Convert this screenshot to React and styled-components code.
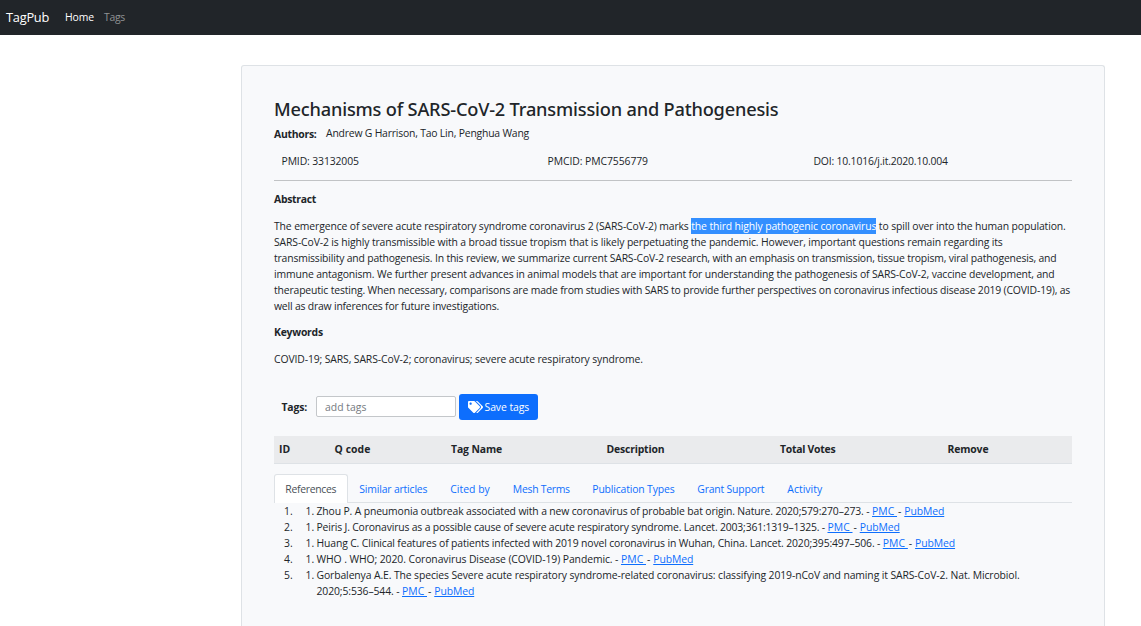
import React from "react";
import styled, { createGlobalStyle } from "styled-components";

const GlobalStyle = createGlobalStyle`
  * { box-sizing: border-box; }
  html, body { margin: 0; background: #fff; overflow: hidden; }
  body {
    height: 626px;
    color: #212529;
    font: 10.4px/16px "Open Sans", "Noto Sans", sans-serif;
    letter-spacing: -0.13px;
  }
`;

const Track = styled.span`
  letter-spacing: ${(p) => p.$ls}px;
  white-space: pre;
`;

const Navbar = styled.nav`
  display: flex;
  align-items: center;
  height: 35px;
  padding: 0 6px 1px;
  background: #212529;
`;

const Brand = styled.a`
  width: 59px;
  color: #fff;
  font-size: 12.8px;
  line-height: 20px;
  letter-spacing: -0.24px;
`;

const NavLink = styled.a`
  margin-right: 10px;
  color: ${(p) => (p.$active ? "#fff" : "#909294")};
  letter-spacing: ${(p) => p.$ls}px;
`;

const Card = styled.main`
  width: 864px;
  height: 561px;
  margin: 30px 0 0 241px;
  padding: 32px 32px 0;
  background: #f8f9fb;
  border: 1px solid #dee2e6;
  border-bottom: 0;
  border-radius: 3px 3px 0 0;
`;

const Title = styled.h1`
  margin: 0 0 5px;
  font-family: "Noto Sans", "Open Sans", sans-serif;
  font-size: 18.2px;
  font-weight: 500;
  line-height: 22px;
  letter-spacing: -0.184px;
  white-space: nowrap;
`;

const Strong = styled.strong`
  font-weight: 700;
  letter-spacing: ${(p) => p.$ls}px;
`;

const Authors = styled.div`
  display: flex;
  gap: 9.5px;
  letter-spacing: -0.195px;

  strong { padding-top: 1px; }
`;

const Identifiers = styled.div`
  display: grid;
  grid-template-columns: repeat(3, 266px);
  margin-top: 11px;
  padding: 0 0 11px 7.5px;
  border-bottom: 1px solid #c1c3c5;
  width: 798px;
  height: 28px;
`;

const SectionTitle = styled.h2`
  margin: ${(p) => p.$top}px 0 11px;
  font-size: 10.4px;
  font-weight: 700;
  line-height: 16px;
  letter-spacing: ${(p) => p.$ls}px;
`;

const Paragraph = styled.p`
  margin: 0;
`;

const Line = styled.span`
  display: block;
  height: 16px;
  white-space: pre;
  letter-spacing: ${(p) => p.$ls}px;
`;

const Selected = styled.span`
  display: inline-block;
  height: 16px;
  background: #338fff;
  color: #fff;
  letter-spacing: -0.129px;
`;

const TagForm = styled.form`
  display: flex;
  align-items: center;
  height: 26px;
  margin-top: 27px;
  padding-left: 7.5px;
`;

const TagLabel = styled.label`
  width: 34.5px;
  font-weight: 700;
  letter-spacing: -0.16px;
`;

const TagInput = styled.input`
  width: 140px;
  height: 21px;
  margin-bottom: 1px;
  padding: 1px 8px 0;
  border: 1px solid #c4c7ca;
  border-radius: 2px;
  background: #fff;
  font: inherit;
  letter-spacing: 0.03px;

  &::placeholder { color: #757a80; opacity: 1; }
`;

const SaveButton = styled.button`
  display: flex;
  align-items: center;
  gap: 1.5px;
  width: 79px;
  height: 26px;
  margin-left: 3px;
  padding: 0 0 0 9px;
  border: 0;
  border-radius: 3px;
  background: #0d6efd;
  color: #fff;
  font: inherit;
  letter-spacing: -0.06px;
  white-space: nowrap;
`;

const TableHead = styled.div`
  display: grid;
  grid-template-columns: 55.5px 116.5px 155.5px 173.5px 167.5px 1fr;
  width: 798px;
  height: 28px;
  margin-top: 16px;
  padding: 5px 0 0 5px;
  background: #eaebed;
  border-bottom: 1px solid #dee2e6;
`;

const Tabs = styled.div`
  display: flex;
  width: 798px;
  height: 29px;
  margin-top: 10px;
  border-bottom: 1px solid #dee2e6;
`;

const Tab = styled.a`
  width: ${(p) => p.$w}px;
  height: 29px;
  padding: 6px 0 0 10.3px;
  border: 1px solid ${(p) => (p.$active ? "#dee2e6" : "transparent")};
  border-bottom: 0;
  border-radius: 3px 3px 0 0;
  background: ${(p) => (p.$active ? "#fff" : "transparent")};
  color: ${(p) => (p.$active ? "#495057" : "#0d6efd")};
  letter-spacing: ${(p) => p.$ls}px;
  white-space: nowrap;
`;

const References = styled.div`
  display: grid;
  grid-template-columns: 18.5px 24px 1fr;
  white-space: pre;
`;

const Marker = styled.span`
  text-align: right;
`;

const InnerMarker = styled.span`
  padding-right: 2.5px;
  text-align: right;
`;

const Link = styled.a`
  color: #0d6efd;
  text-decoration: underline;
  letter-spacing: ${(p) => p.$ls}px;
  text-underline-offset: 1px;
`;

const Dash = styled.span`
  padding-left: 0.9px;
  letter-spacing: 0.15px;
`;

const TagsIcon = () => (
  <svg width="15" height="12" viewBox="0 0 640 512" fill="#fff" aria-hidden="true">
    <path d="M497.941 225.941L286.059 14.059A48 48 0 0 0 252.118 0H48C21.49 0 0 21.49 0 48v204.118a48 48 0 0 0 14.059 33.941l211.882 211.882c18.744 18.745 49.136 18.746 67.882 0l204.118-204.118c18.745-18.745 18.745-49.137 0-67.882zM112 160c-26.51 0-48-21.49-48-48s21.49-48 48-48 48 21.49 48 48-21.49 48-48 48zm513.941 133.823L421.823 497.941c-18.745 18.745-49.137 18.745-67.882 0l-.36-.36L527.64 323.522c16.999-16.999 26.36-39.6 26.36-63.64s-9.362-46.641-26.36-63.64L331.397 0h48.721a48 48 0 0 1 33.941 14.059l211.882 211.882c18.745 18.745 18.745 49.137 0 67.882z" />
  </svg>
);

const tabs = [
  ["References", 74, -0.28],
  ["Similar articles", 91, -0.165],
  ["Cited by", 62.5, 0.02],
  ["Mesh Terms", 79.5, -0.26],
  ["Publication Types", 105, -0.15],
  ["Grant Support", 90, -0.18],
  ["Activity", 60, 0.05],
];

const columns = [
  ["ID", 0.18],
  ["Q code", 0.09],
  ["Tag Name", -0.117],
  ["Description", -0.17],
  ["Total Votes", -0.25],
  ["Remove", -0.13],
];

const references = [
  [["Zhou P. A pneumonia outbreak associated with a new coronavirus of probable bat origin. Nature. 2020;579:270–273. - ", -0.139]],
  [["Peiris J. Coronavirus as a possible cause of severe acute respiratory syndrome. Lancet. 2003;361:1319–1325. - ", -0.17]],
  [["Huang C. Clinical features of patients infected with 2019 novel coronavirus in Wuhan, China. Lancet. 2020;395:497–506. - ", -0.138]],
  [["WHO . WHO; 2020. Coronavirus Disease (COVID-19) Pandemic. - ", -0.088]],
  [
    ["Gorbalenya A.E. The species Severe acute respiratory syndrome-related coronavirus: classifying 2019-nCoV and naming it SARS-CoV-2. Nat. Microbiol.", -0.112],
    ["2020;5:536–544. - ", -0.11],
  ],
];

export default function App() {
  return (
    <>
      <GlobalStyle />
      <Navbar>
        <Brand>TagPub</Brand>
        <NavLink $active $ls={-0.094}>Home</NavLink>
        <NavLink $ls={-0.273}>Tags</NavLink>
      </Navbar>
      <Card>
        <Title>Mechanisms of SARS-CoV-2 Transmission and Pathogenesis</Title>
        <Authors>
          <Strong $ls={-0.266}>Authors:</Strong>
          <span>Andrew G Harrison, Tao Lin, Penghua Wang</span>
        </Authors>
        <Identifiers>
          <Track $ls={-0.12}>PMID: 33132005</Track>
          <Track $ls={-0.074}>PMCID: PMC7556779</Track>
          <Track $ls={-0.18}>DOI: 10.1016/j.it.2020.10.004</Track>
        </Identifiers>
        <SectionTitle $top={10} $ls={-0.285}>Abstract</SectionTitle>
        <Paragraph>
          <Line $ls={-0.125}>
            {"The emergence of severe acute respiratory syndrome coronavirus 2 (SARS-CoV-2) marks "}
            <Selected>the third highly pathogenic coronavirus</Selected>
            <Track $ls={-0.12}>{" to spill over into the human population."}</Track>
          </Line>
          <Line $ls={-0.125}>SARS-CoV-2 is highly transmissible with a broad tissue tropism that is likely perpetuating the pandemic. However, important questions remain regarding its</Line>
          <Line $ls={-0.172}>transmissibility and pathogenesis. In this review, we summarize current SARS-CoV-2 research, with an emphasis on transmission, tissue tropism, viral pathogenesis, and</Line>
          <Line $ls={-0.142}>immune antagonism. We further present advances in animal models that are important for understanding the pathogenesis of SARS-CoV-2, vaccine development, and</Line>
          <Line $ls={-0.153}>therapeutic testing. When necessary, comparisons are made from studies with SARS to provide further perspectives on coronavirus infectious disease 2019 (COVID-19), as</Line>
          <Line $ls={-0.188}>well as draw inferences for future investigations.</Line>
        </Paragraph>
        <SectionTitle $top={10} $ls={-0.24}>Keywords</SectionTitle>
        <Paragraph>
          <Line $ls={-0.116}>COVID-19; SARS, SARS-CoV-2; coronavirus; severe acute respiratory syndrome.</Line>
        </Paragraph>
        <TagForm>
          <TagLabel>Tags:</TagLabel>
          <TagInput placeholder="add tags" />
          <SaveButton type="button">
            <TagsIcon />
            Save tags
          </SaveButton>
        </TagForm>
        <TableHead>
          {columns.map(([name, ls]) => (
            <Strong key={name} $ls={ls}>{name}</Strong>
          ))}
        </TableHead>
        <Tabs>
          {tabs.map(([name, w, ls], i) => (
            <Tab key={name} $w={w} $ls={ls} $active={i === 0}>{name}</Tab>
          ))}
        </Tabs>
        <References>
          {references.map((lines, i) => (
            <React.Fragment key={i}>
              <Marker>{i + 1}.</Marker>
              <InnerMarker>1.</InnerMarker>
              <div>
                {lines.map(([text, ls], j) => (
                  <Line key={j} $ls={ls}>
                    {text}
                    {j === lines.length - 1 && (
                      <>
                        <Link $ls={0.04}>{"PMC "}</Link>
                        <Dash>{"- "}</Dash>
                        <Link $ls={-0.089}>PubMed</Link>
                      </>
                    )}
                  </Line>
                ))}
              </div>
            </React.Fragment>
          ))}
        </References>
      </Card>
    </>
  );
}
